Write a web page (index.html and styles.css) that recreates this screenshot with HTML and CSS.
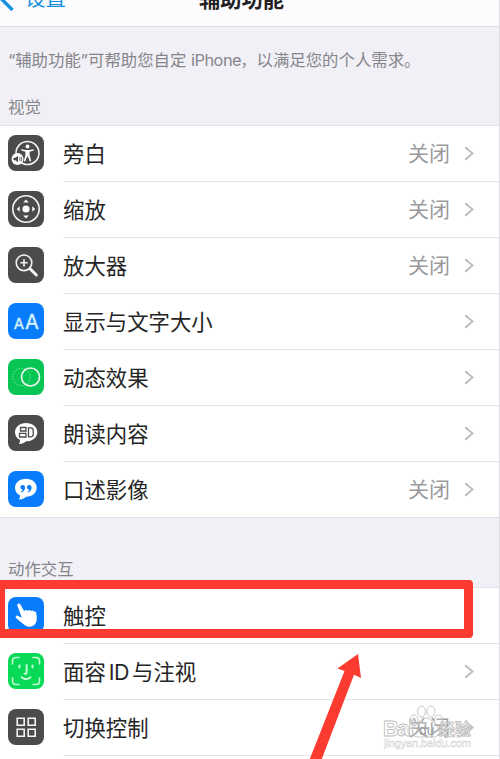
FILE: index.html
```html
<!DOCTYPE html>
<html lang="zh-CN">
<head>
<meta charset="UTF-8">
<meta name="viewport" content="width=device-width, initial-scale=1.0">
<link rel="stylesheet" href="styles.css">
<title>辅助功能</title>
</head>
<body>

<div class="screen">
    <header class="navbar">
        <a class="back">
            <svg class="back-icon" width="14" height="24" viewBox="0 0 14 24"><path d="M12.5 23L1.5 12L12.5 1"/></svg>
            <span>设置</span>
        </a>
        <h1>辅助功能</h1>
    </header>

    <p class="intro">“辅助功能”可帮助您自定 <span class="latin">iPhone</span>，以满足您的个人需求。</p>

    <h2 class="vision">视觉</h2>
    <ul class="group">
        <li class="row">
            <svg class="icon dark" viewBox="0 0 36 36">
                <circle class="line" cx="19.5" cy="18" r="11.5"/>
                <circle class="fill" cx="19.5" cy="11.5" r="2"/>
                <path class="fill" d="M13.2 14.2L18 15H21L25.8 14.2V15.6L21.6 16.7V20L23.2 26L21.8 26.5L19.8 21.2H19.2L17.2 26.5L15.8 26L17.4 20V16.7L13.2 15.6Z"/>
                <circle class="fill" cx="9.5" cy="24" r="6"/>
                <path class="ink" d="M5.5 22.8H7.5L10 20.8V27.2L7.5 25.2H5.5Z"/>
                <path class="ink-line thin" d="M11.5 22.3Q12.5 24 11.5 25.7M13 21.5Q14.5 24 13 26.5"/>
            </svg>
            <div class="content"><span class="label">旁白</span><span class="value">关闭</span><svg class="chevron" viewBox="0 0 10 15"><path d="M1.2 1.2L8.5 7.5L1.2 13.8"/></svg></div>
        </li>
        <li class="row">
            <svg class="icon dark" viewBox="0 0 36 36">
                <circle class="line" cx="18" cy="18" r="13.2"/>
                <circle class="fill" cx="18" cy="18" r="3.6"/>
                <path class="fill" d="M18 8.5L20.8 11.4H15.2ZM18 27.5L20.8 24.6H15.2ZM8.8 18L11.7 15.3V20.7ZM27.2 18L24.3 15.3V20.7Z"/>
            </svg>
            <div class="content"><span class="label">缩放</span><span class="value">关闭</span><svg class="chevron" viewBox="0 0 10 15"><path d="M1.2 1.2L8.5 7.5L1.2 13.8"/></svg></div>
        </li>
        <li class="row">
            <svg class="icon dark" viewBox="0 0 36 36">
                <circle class="line" cx="16" cy="15.8" r="7.8"/>
                <path class="line" d="M16 12.2V19.4M12.4 15.8H19.6"/>
                <path class="line thick" d="M22 21.8L28.3 28"/>
            </svg>
            <div class="content"><span class="label">放大器</span><span class="value">关闭</span><svg class="chevron" viewBox="0 0 10 15"><path d="M1.2 1.2L8.5 7.5L1.2 13.8"/></svg></div>
        </li>
        <li class="row">
            <svg class="icon blue" viewBox="0 0 36 36">
                <text class="letter small" x="5.8" y="26">A</text>
                <text class="letter big" x="17" y="26">A</text>
            </svg>
            <div class="content"><span class="label">显示与文字大小</span><svg class="chevron" viewBox="0 0 10 15"><path d="M1.2 1.2L8.5 7.5L1.2 13.8"/></svg></div>
        </li>
        <li class="row">
            <svg class="icon green" viewBox="0 0 36 36">
                <circle class="line dots" cx="13.5" cy="18" r="8.7"/>
                <circle class="line" cx="22.5" cy="18" r="9"/>
            </svg>
            <div class="content"><span class="label">动态效果</span><svg class="chevron" viewBox="0 0 10 15"><path d="M1.2 1.2L8.5 7.5L1.2 13.8"/></svg></div>
        </li>
        <li class="row">
            <svg class="icon dark" viewBox="0 0 36 36">
                <path class="fill" d="M18 8C24.5 8 29.3 12 29.3 17.2S24.5 26.3 18.2 26.3C16.5 28 14 28.8 10.8 29C12 27.5 12.2 26 11.8 24.8C8.7 23.2 7 20.5 7 17.2C7 12 11.8 8 18 8Z"/>
                <path class="ink-line" d="M12.5 12.5H18V16H12.5ZM11.5 18.3H18V22H11.5ZM20.5 12.8H22.8Q25.2 13 25.2 15V19.5Q25.2 21.5 23 21.8H20.5Z"/>
            </svg>
            <div class="content"><span class="label">朗读内容</span><svg class="chevron" viewBox="0 0 10 15"><path d="M1.2 1.2L8.5 7.5L1.2 13.8"/></svg></div>
        </li>
        <li class="row">
            <svg class="icon blue" viewBox="0 0 36 36">
                <path class="fill" d="M18 7.8C24.2 7.8 28.7 11.7 28.7 16.8S24.2 25.8 18.2 25.8C16.5 27.5 14 28.3 10.8 28.5C12 27 12.2 25.7 11.8 24.3C8.7 22.8 7 20 7 16.8C7 11.7 11.8 7.8 18 7.8Z"/>
                <path class="ink" d="M17 16.5Q17 20.5 13.2 21.5L13 20.5Q14.8 19.8 15 18.7A2.3 2.3 0 1 1 17 16.5ZM23.6 16.5Q23.6 20.5 19.8 21.5L19.6 20.5Q21.4 19.8 21.6 18.7A2.3 2.3 0 1 1 23.6 16.5Z"/>
            </svg>
            <div class="content"><span class="label">口述影像</span><span class="value">关闭</span><svg class="chevron" viewBox="0 0 10 15"><path d="M1.2 1.2L8.5 7.5L1.2 13.8"/></svg></div>
        </li>
    </ul>

    <h2 class="motion">动作交互</h2>
    <ul class="group">
        <li class="row">
            <svg class="icon blue" viewBox="0 0 36 36">
                <path class="fill" d="M9.2 8.2C9.8 6.2 11.8 6 12.6 7.8L16.2 14.2C16.8 12.8 18.5 12.7 19.3 13.9C20.2 12.6 22 12.7 22.8 14C23.9 12.9 25.4 13.4 26 14.7C27.4 14 28.2 15 28.3 16.5C28.8 20 29.3 23 27.8 26C25.8 30 20.5 31 16.5 28L8.3 21.3C6.8 20 8 18.2 9.8 18.7L13.8 20.8Z"/>
            </svg>
            <div class="content"><span class="label">触控</span></div>
        </li>
        <li class="row">
            <svg class="icon green face" viewBox="0 0 36 36">
                <path class="line" d="M4.5 11V8Q4.5 4.5 8 4.5H11M25 4.5H28Q31.5 4.5 31.5 8V11M31.5 25V28Q31.5 31.5 28 31.5H25M11 31.5H8Q4.5 31.5 4.5 28V25"/>
                <path class="line bold" d="M11.5 12.5V14.5M24.5 12.5V14.5M18.6 12V19.5Q18.6 21 16.5 20.7M13.5 24.3Q18 28 22.5 24.3"/>
            </svg>
            <div class="content"><span class="label">面容 <span class="latin">ID</span> 与注视</span><svg class="chevron" viewBox="0 0 10 15"><path d="M1.2 1.2L8.5 7.5L1.2 13.8"/></svg></div>
        </li>
        <li class="row">
            <svg class="icon dark" viewBox="0 0 36 36">
                <path class="line" d="M9.2 9.2H16.2V16.2H9.2ZM20.2 9.2H27.2V16.2H20.2ZM9.2 20.2H16.2V27.2H9.2ZM20.2 20.2H27.2V27.2H20.2Z"/>
            </svg>
            <div class="content"><span class="label">切换控制</span><span class="value">关闭</span><svg class="chevron" viewBox="0 0 10 15"><path d="M1.2 1.2L8.5 7.5L1.2 13.8"/></svg></div>
        </li>
        <li class="row"></li>
    </ul>

    <!-- red frame and arrow over the list -->
    <div class="highlight"></div>
    <svg class="arrow" width="56" height="106" viewBox="0 0 56 106">
        <path d="M50 1L53 25L46 21.8L13 108H1L36.5 18L29.5 15.5Z"/>
    </svg>

    <svg class="watermark" width="96" height="48" viewBox="0 0 96 48">
        <g class="paw">
            <ellipse cx="32" cy="18" rx="4" ry="5"/>
            <ellipse cx="39.5" cy="9.5" rx="4" ry="5.5"/>
            <ellipse cx="49" cy="9.5" rx="4" ry="5.5"/>
            <ellipse cx="56.5" cy="18" rx="4" ry="5"/>
            <path d="M44 16C49 16 51 21 55 24C60 29 57 35 51 35H36C30 35 28 28 33 24C37 21 39 16 44 16Z"/>
        </g>
        <text class="brand" x="1" y="34" textLength="31">Bai</text>
        <text class="du" x="37" y="33">du</text>
        <text class="brand cn" x="57" y="33" textLength="32">经验</text>
        <text class="site" x="2" y="45" textLength="87">jingyan.baidu.com</text>
    </svg>
</div>

</body>
</html>
```

FILE: styles.css
```css
body {
    margin: 0;
    font-family: Inter, "Noto Sans CJK SC", sans-serif;
    background-color: #f1f0f6;
    color: #252525;
}

.screen {
    position: relative;
    box-sizing: border-box;
    width: 500px;
    height: 759px;
    overflow: hidden;
    border-right: 1px solid #dcdce0;
}

/* scrolled a little under the top edge */
.navbar {
    display: grid;
    grid-template-columns: 1fr auto 1fr;
    align-items: start;
    box-sizing: border-box;
    height: 40px;
    margin-top: -13px;
    padding-right: 16px;
    background-color: #fcfcfe;
    border-bottom: 1px solid #dddde2;
}

.back {
    display: flex;
    align-items: center;
    gap: 11px;
    font-size: 20.5px;
    line-height: 24px;
    color: #1590dc;
}

.back-icon {
    flex: none;
    fill: none;
    stroke: #1590dc;
    stroke-width: 3.4;
}

h1 {
    margin: 0;
    font-size: 21.3px;
    font-weight: bold;
    line-height: 24px;
    color: #222;
}

.intro {
    margin: 0;
    padding: 20px 8px 0;
    font-size: 16.4px;
    line-height: 26px;
    white-space: nowrap;
    color: #85858a;
}

h2 {
    margin: 0;
    padding-left: 8px;
    font-size: 16.4px;
    font-weight: normal;
    line-height: 24px;
    color: #85858a;
}

.vision {
    padding-top: 22px;
    padding-bottom: 6px;
}

.motion {
    padding-top: 39px;
    padding-bottom: 6px;
}

.group {
    margin: 0;
    padding: 0;
    list-style: none;
    background-color: #fff;
    border-top: 1px solid #e2e2e6;
    border-bottom: 1px solid #e2e2e6;
}

.row {
    display: flex;
    align-items: center;
    gap: 19px;
    height: 56px;
    padding-left: 8px;
}

.row:last-child {
    height: 55px;
}

.content {
    display: flex;
    align-items: center;
    flex: 1;
    box-sizing: border-box;
    height: 100%;
    padding-right: 25px;
    border-bottom: 1px solid #e4e4e6;
}

.row:last-child .content {
    border-bottom: none;
}

.label {
    flex: 1;
    padding-top: 1px;
    font-size: 21.4px;
    line-height: 30px;
    white-space: pre;
}

.value {
    margin-right: 14px;
    padding-top: 1px;
    font-size: 21px;
    line-height: 30px;
    color: #9a9a9c;
}

.latin {
    margin-right: -1px;
    letter-spacing: -0.5px;
}

.label .latin {
    margin: 0 -3px;
}

.chevron {
    width: 10px;
    height: 15px;
    fill: none;
    stroke: #bdbdbf;
    stroke-width: 2;
}

/* icons */
.icon {
    flex: none;
    width: 36px;
    height: 36px;
    margin-bottom: 2px;
    border-radius: 8px;
}

.dark {
    background-color: #4b4a4c;
    color: #4b4a4c;
}

.blue {
    background-color: #087cfa;
    color: #087cfa;
}

.green {
    background-color: #08c653;
    color: #08c653;
}

.face {
    background-color: #08d957;
}

.fill {
    fill: #fff;
}

.ink {
    fill: currentColor;
}

.ink-line {
    fill: none;
    stroke: currentColor;
    stroke-width: 1.3;
}

.thin {
    stroke-width: 0.8;
}

.line {
    fill: none;
    stroke: #f4f4f4;
    stroke-width: 1.6;
}

.thick {
    stroke-width: 3;
    stroke-linecap: round;
}

.dots {
    stroke: #a0f0b8;
    stroke-width: 1;
    stroke-dasharray: 1.2 1.5;
}

.face .line {
    stroke: #c4ffd2;
    stroke-linecap: round;
}

.face .bold {
    stroke-width: 2;
}

.letter {
    font-family: Inter, sans-serif;
    fill: #d5f2ff;
    stroke: #d5f2ff;
    stroke-width: 0.4;
}

.small {
    font-size: 15px;
}

.big {
    font-size: 20px;
}

/* overlays */
.highlight {
    position: absolute;
    top: 580px;
    left: -4px;
    box-sizing: border-box;
    width: 477px;
    height: 58px;
    border: 9px solid #fc3b30;
    border-radius: 4px;
}

.arrow {
    position: absolute;
    top: 653px;
    left: 308px;
    fill: #fc3b30;
}

.watermark {
    position: absolute;
    top: 702px;
    left: 382px;
}

.paw {
    fill: rgba(255, 255, 255, 0.2);
    stroke: #c0c0c0;
    stroke-width: 0.9;
}

.brand {
    font-family: "Liberation Sans", sans-serif;
    font-size: 22px;
    font-weight: bold;
    fill: rgba(255, 255, 255, 0.6);
    stroke: #bcbcbc;
    stroke-width: 0.8;
}

.cn {
    font-family: "Noto Sans CJK SC", sans-serif;
    font-size: 16px;
}

.du {
    font-family: "Liberation Sans", sans-serif;
    font-size: 14px;
    fill: #999;
}

.site {
    font-family: "Liberation Sans", sans-serif;
    font-size: 11px;
    fill: #fff;
    stroke: #d2d2d2;
    stroke-width: 0.5;
}
```
